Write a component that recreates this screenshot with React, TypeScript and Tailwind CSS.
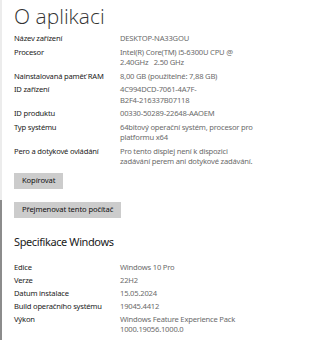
import React from 'react'

const font = { fontFamily: '"Noto Sans", "Open Sans", sans-serif' }

type Row = { label: string; value: string[] }

const device: Row[] = [
  { label: 'Název zařízení', value: ['DESKTOP-NA33GOU'] },
  { label: 'Procesor', value: ['Intel(R) Core(TM) i5-6300U CPU @', '2.40GHz   2.50 GHz'] },
  { label: 'Nainstalovaná paměť RAM', value: ['8,00 GB (použitelné: 7,88 GB)'] },
  { label: 'ID zařízení', value: ['4C994DCD-7061-4A7F-', 'B2F4-216337B07118'] },
  { label: 'ID produktu', value: ['00330-50289-22648-AAOEM'] },
  { label: 'Typ systému', value: ['64bitový operační systém, procesor pro', 'platformu x64'] },
  { label: 'Pero a dotykové ovládání', value: ['Pro tento displej není k dispozici', 'zadávání perem ani dotykové zadávání.'] },
]

const windows: Row[] = [
  { label: 'Edice', value: ['Windows 10 Pro'] },
  { label: 'Verze', value: ['22H2'] },
  { label: 'Datum instalace', value: ['15.05.2024'] },
  { label: 'Build operačního systému', value: ['19045.4412'] },
  { label: 'Výkon', value: ['Windows Feature Experience Pack', '1000.19056.1000.0'] },
]

function InfoRows({ rows, gap }: { rows: Row[]; gap: string }) {
  return (
    <div className={`flex flex-col ${gap}`}>
      {rows.map((r) => (
        <div key={r.label} className="flex text-[7.6px] leading-[10.5px] tracking-[-0.2px]">
          <div className="w-[106px] shrink-0 text-[#1b1b1b]">{r.label}</div>
          <div className="text-[#6b6b6b] whitespace-pre">
            {r.value.map((v) => (
              <div key={v}>{v}</div>
            ))}
          </div>
        </div>
      ))}
    </div>
  )
}

export default function App() {
  return (
    <div className="flex w-[328px] h-[340px] bg-white overflow-hidden" style={font}>
      <div className="flex flex-col w-[2px] shrink-0">
        <div className="h-[200px] bg-[#ececec]" />
        <div className="flex-1 bg-[#8c8c8c]" />
      </div>
      <div className="flex flex-col pl-[12px] pt-[1px]">
        <h1
          className="text-[21px] leading-[30px] font-light text-[#333]"
          style={{ fontFamily: '"Open Sans Light", "Lato Light", "Open Sans", sans-serif' }}
        >
          O aplikaci
        </h1>
        <div className="mt-[2px]">
          <InfoRows rows={device} gap="gap-[3px]" />
        </div>
        <button className="mt-[6px] self-start h-[16px] px-[8px] bg-[#cccccc] text-[7.6px] tracking-[-0.1px] text-[#111]">
          Kopírovat
        </button>
        <button className="mt-[13px] self-start h-[16px] px-[8px] bg-[#cccccc] text-[7.6px] tracking-[-0.1px] text-[#111]">
          Přejmenovat tento počítač
        </button>
        <h2 className="mt-[15px] text-[11px] leading-[18px] tracking-[-0.4px] text-[#1a1a1a]">
          Specifikace Windows
        </h2>
        <div className="mt-[11px]">
          <InfoRows rows={windows} gap="gap-[2.5px]" />
        </div>
      </div>
    </div>
  )
}
